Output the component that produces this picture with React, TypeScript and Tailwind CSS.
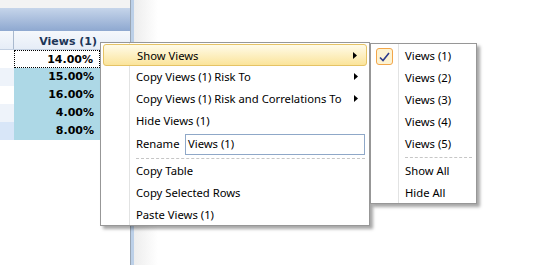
import React from "react";

const menuFont = { fontFamily: '"Noto Sans", "Open Sans", sans-serif' };
const gridFont = { fontFamily: '"DejaVu Sans", Verdana, sans-serif' };

function Arrow() {
  return (
    <svg width="4" height="7" viewBox="0 0 4 7" className="absolute right-[9px] top-[7px]">
      <path d="M0 0 L4 3.5 L0 7 Z" fill="#000" />
    </svg>
  );
}

function MenuItem({
  label,
  arrow,
  active,
}: {
  label: string;
  arrow?: boolean;
  active?: boolean;
}) {
  return (
    <div className="relative h-[22px] px-[2px]">
      <div
        className={`relative h-full rounded-[3px] pl-[33px] leading-[21px] ${
          active
            ? "border border-[#e5c365] bg-gradient-to-b from-[#fffbe8] to-[#fbe49a] pl-[32px] leading-[20px]"
            : ""
        }`}
      >
        {label}
        {arrow && <Arrow />}
      </div>
    </div>
  );
}

const rows = [
  { v: "14.00%", a: "bg-white", focus: true },
  { v: "15.00%", a: "bg-[#eef3fa]" },
  { v: "16.00%", a: "bg-white" },
  { v: "4.00%", a: "bg-[#eef3fa]" },
  { v: "8.00%", a: "bg-[#d8e6f8]" },
];

export default function App() {
  return (
    <div className="relative flex h-[265px] w-[547px] overflow-hidden bg-white">
      {/* grid panel */}
      <div className="flex w-[130px] flex-col" style={gridFont}>
        <div className="h-[8px] bg-[#f3f3f3]" />
        <div className="h-[23px] bg-gradient-to-b from-[#c6d5ea] to-[#8ea8d0]" />
        <div className="flex h-[19px] border-b border-[#c3d0e2] bg-gradient-to-b from-[#f5f8fc] to-[#e6edf7]">
          <div className="w-[14px] border-r border-[#a9b9ce]" />
          <div className="w-[86px] pr-[3px] text-right text-[11px] font-bold leading-[21px] text-[#1c3557]">
            Views (1)
          </div>
        </div>
        {rows.map((r) => (
          <div key={r.v} className="flex h-[18px]">
            <div className={`w-[14px] ${r.a}`} />
            <div
              className={`w-[86px] pr-[6px] text-right text-[11px] font-bold leading-[18px] text-black ${
                r.focus ? "border border-dotted border-black bg-white leading-[16px] pr-[5px]" : "bg-[#add8e6]"
              }`}
            >
              {r.v}
            </div>
          </div>
        ))}
      </div>
      <div className="w-[1px] bg-[#9aa6b4]" />
      <div className="w-[3px] bg-[#bcd0e8]" />
      <div className="w-[24px] bg-gradient-to-r from-[#ededed] to-white" />
      <div className="flex-1 bg-white" />

      {/* context menu */}
      <div
        className="absolute left-[100px] top-[42px] h-[184px] w-[270px] border border-[#979797] bg-white pt-[1px] text-[11.25px] text-black shadow-[3px_3px_3px_rgba(0,0,0,0.35)]"
        style={menuFont}
      >
        <div className="absolute bottom-0 left-[28px] top-0 w-[1px] bg-[#e2e3e3]" />
        <MenuItem label="Show Views" arrow active />
        <MenuItem label="Copy Views (1) Risk To" arrow />
        <MenuItem label="Copy Views (1) Risk and Correlations To" arrow />
        <MenuItem label="Hide Views (1)" />
        <div className="relative flex h-[25px] items-center pl-[35px] pr-[4px]">
          <span className="w-[49px]">Rename</span>
          <div className="flex h-[21px] flex-1 items-center border border-[#8fa8c8] bg-white pl-[2px]">
            Views (1)
          </div>
        </div>
        <div className="flex h-[3px] items-center pl-[35px] pr-[4px]">
          <div className="w-full border-t border-dashed border-[#c6c6c6]" />
        </div>
        <MenuItem label="Copy Table" />
        <MenuItem label="Copy Selected Rows" />
        <MenuItem label="Paste Views (1)" />
      </div>

      {/* submenu */}
      <div
        className="absolute left-[370px] top-[43px] h-[161px] w-[107px] border border-[#979797] bg-white pt-[1px] text-[11.25px] text-black shadow-[3px_3px_3px_rgba(0,0,0,0.35)]"
        style={menuFont}
      >
        <div className="absolute bottom-0 left-[27px] top-0 w-[1px] bg-[#e2e3e3]" />
        <div className="relative h-[22px] pl-[34px] leading-[21px]">
          <div className="absolute left-[5px] top-[3px] flex h-[17px] w-[17px] items-center justify-center rounded-[3px] border border-[#f2a64a] bg-[#fdf3d2]">
            <svg width="11" height="10" viewBox="0 0 11 10">
              <path d="M1 5.5 L4 8.5 L10 1" fill="none" stroke="#2b3a8c" strokeWidth="1.6" />
            </svg>
          </div>
          Views (1)
        </div>
        {["Views (2)", "Views (3)", "Views (4)", "Views (5)"].map((t) => (
          <div key={t} className="h-[22px] pl-[34px] leading-[21px]">
            {t}
          </div>
        ))}
        <div className="flex h-[5px] items-center pl-[34px] pr-[4px]">
          <div className="w-full border-t border-dashed border-[#c6c6c6]" />
        </div>
        <div className="h-[22px] pl-[34px] leading-[21px]">Show All</div>
        <div className="h-[22px] pl-[34px] leading-[21px]">Hide All</div>
      </div>
    </div>
  );
}
